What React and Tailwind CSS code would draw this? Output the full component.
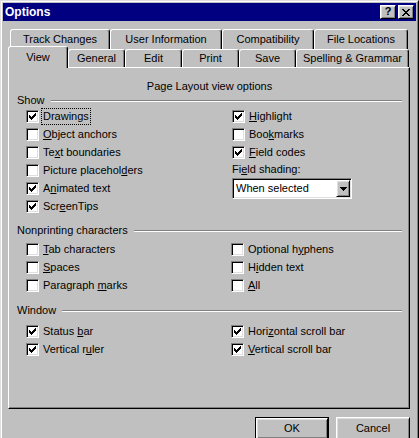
function mn(text, i) {
  if (i == null) return text;
  return (
    <>
      {text.slice(0, i)}
      <u>{text[i]}</u>
      {text.slice(i + 1)}
    </>
  );
}

function Check() {
  return (
    <svg width="7" height="7" viewBox="0 0 7 7" shapeRendering="crispEdges">
      <path
        d="M0 2h1v3h-1z M1 3h1v3h-1z M2 4h1v3h-1z M3 3h1v3h-1z M4 2h1v3h-1z M5 1h1v3h-1z M6 0h1v3h-1z"
        fill="#000"
      />
    </svg>
  );
}

function Box({ checked }) {
  return (
    <span className="flex h-[13px] w-[13px] shrink-0 items-center justify-center border border-t-[#808080] border-l-[#808080] border-r-white border-b-white bg-white shadow-[inset_1px_1px_0_#000,inset_-1px_-1px_0_#dfdfdf]">
      {checked && <Check />}
    </span>
  );
}

function Row({ checked, text, u, focus }) {
  return (
    <div className="flex h-[18px] items-center">
      <Box checked={checked} />
      <span
        className={
          focus
            ? 'ml-[4px] outline-1 outline-dotted outline-black outline-offset-1'
            : 'ml-[4px]'
        }
      >
        {mn(text, u)}
      </span>
    </div>
  );
}

function Group({ title, className = '' }) {
  return (
    <div className={`flex h-[13px] items-center ${className}`}>
      <span>{title}</span>
      <span className="ml-[6px] h-[2px] flex-1 border-t border-b border-t-[#808080] border-b-white" />
    </div>
  );
}

function Tab({ className = '', children }) {
  return (
    <div
      className={`flex shrink-0 items-center justify-center rounded-t-[3px] border-l border-t border-r border-l-white border-t-white border-r-black bg-[#c0c0c0] shadow-[inset_-1px_0_0_#808080] ${className}`}
    >
      {children}
    </div>
  );
}

const raised =
  'border border-t-white border-l-white border-r-black border-b-black shadow-[inset_1px_1px_0_#dfdfdf,inset_-1px_-1px_0_#808080]';

function CloseGlyph() {
  return (
    <svg width="8" height="7" viewBox="0 0 8 7" shapeRendering="crispEdges">
      <path
        d="M0 0h2v1h-2z M6 0h2v1h-2z M1 1h2v1h-2z M5 1h2v1h-2z M2 2h4v1h-4z M3 3h2v1h-2z M2 4h4v1h-4z M1 5h2v1h-2z M5 5h2v1h-2z M0 6h2v1h-2z M6 6h2v1h-2z"
        fill="#000"
      />
    </svg>
  );
}

function Arrow() {
  return (
    <svg width="7" height="4" viewBox="0 0 7 4" shapeRendering="crispEdges">
      <path d="M0 0h7v1h-7z M1 1h5v1h-5z M2 2h3v1h-3z M3 3h1v1h-1z" fill="#000" />
    </svg>
  );
}

export default function App() {
  return (
    <div className="h-[438px] w-[419px] overflow-hidden bg-[#c0c0c0] font-['Liberation_Sans',Arial,sans-serif] text-[11px] leading-[13px] text-black">
      <div className="h-[470px] border-l border-t border-r border-l-[#dfdfdf] border-t-[#dfdfdf] border-r-black">
        <div className="h-full border-l border-t border-r border-l-white border-t-white border-r-[#808080] p-px">
          {/* title bar */}
          <div className="flex h-[18px] items-center bg-[#000080] pl-[2px] pr-[2px]">
            <span className="text-[12px] font-bold text-white">Options</span>
            <div className="ml-auto flex gap-[2px]">
              <div className={`flex h-[14px] w-[16px] items-center justify-center bg-[#c0c0c0] pb-px text-[11px] leading-none font-bold text-black ${raised}`}>
                ?
              </div>
              <div className={`flex h-[14px] w-[16px] items-center justify-center bg-[#c0c0c0] ${raised}`}>
                <CloseGlyph />
              </div>
            </div>
          </div>

          <div className="px-[5px]">
            {/* back row of tabs */}
            <div className="mt-[8px] flex h-[17px] pl-[2px]">
              <Tab className="h-[20px] w-[100px]">Track Changes</Tab>
              <Tab className="h-[20px] w-[112px]">User Information</Tab>
              <Tab className="h-[20px] w-[92px]">Compatibility</Tab>
              <Tab className="h-[20px] w-[94px]">File Locations</Tab>
            </div>
            {/* front row of tabs */}
            <div className="relative z-10 flex h-[21px] items-end">
              <Tab className="-mb-px h-[22px] w-[60px]">View</Tab>
              <Tab className="h-[18px] w-[57px]">General</Tab>
              <Tab className="h-[18px] w-[57px]">Edit</Tab>
              <Tab className="h-[18px] w-[57px]">Print</Tab>
              <Tab className="h-[18px] w-[57px]">Save</Tab>
              <Tab className="h-[18px] w-[113px]">Spelling &amp; Grammar</Tab>
            </div>

            {/* panel */}
            <div className="h-[342px] w-[402px] border border-l-white border-t-white border-r-black border-b-black pt-[12px] pr-[7px] pl-[8px] shadow-[inset_-1px_-1px_0_#808080]">
              <div className="h-[13px] text-center">Page Layout view options</div>

              <Group title="Show" className="mt-px" />
              <div className="flex pl-[9px]">
                <div className="w-[206px]">
                  <Row checked text="Drawings" u={6} focus />
                  <Row text="Object anchors" u={0} />
                  <Row text="Text boundaries" u={2} />
                  <Row text="Picture placeholders" u={16} />
                  <Row checked text="Animated text" u={1} />
                  <Row checked text="ScreenTips" u={3} />
                </div>
                <div>
                  <Row checked text="Highlight" u={0} />
                  <Row text="Bookmarks" u={3} />
                  <Row checked text="Field codes" u={0} />
                  <div className="flex h-[17px] items-center">{mn('Field shading:', 2)}</div>
                  <div className="flex h-[21px] w-[120px] border border-t-[#808080] border-l-[#808080] border-r-white border-b-white bg-white p-px shadow-[inset_1px_1px_0_#000,inset_-1px_-1px_0_#dfdfdf]">
                    <span className="flex-1 pl-[2px] leading-[17px]">When selected</span>
                    <span className={`flex h-[17px] w-[14px] items-center justify-center bg-[#c0c0c0] ${raised}`}>
                      <Arrow />
                    </span>
                  </div>
                </div>
              </div>

              <Group title="Nonprinting characters" className="mt-[9px]" />
              <div className="mt-[3px] flex pl-[9px]">
                <div className="w-[205px]">
                  <Row text="Tab characters" u={0} />
                  <Row text="Spaces" u={0} />
                  <Row text="Paragraph marks" u={10} />
                </div>
                <div>
                  <Row text="Optional hyphens" u={10} />
                  <Row text="Hidden text" u={1} />
                  <Row text="All" u={0} />
                </div>
              </div>

              <Group title="Window" className="mt-[10px]" />
              <div className="mt-[5px] flex pl-[9px]">
                <div className="w-[205px]">
                  <Row checked text="Status bar" u={7} />
                  <Row checked text="Vertical ruler" u={10} />
                </div>
                <div>
                  <Row checked text="Horizontal scroll bar" u={4} />
                  <Row checked text="Vertical scroll bar" u={0} />
                </div>
              </div>
            </div>

            {/* buttons */}
            <div className="mt-[8px] flex w-[402px] justify-end gap-[7px]">
              <div className="h-[23px] w-[74px] border border-black">
                <div className={`flex h-full w-full items-center justify-center ${raised}`}>OK</div>
              </div>
              <div className={`flex h-[23px] w-[74px] items-center justify-center ${raised}`}>Cancel</div>
            </div>
          </div>
        </div>
      </div>
    </div>
  );
}
